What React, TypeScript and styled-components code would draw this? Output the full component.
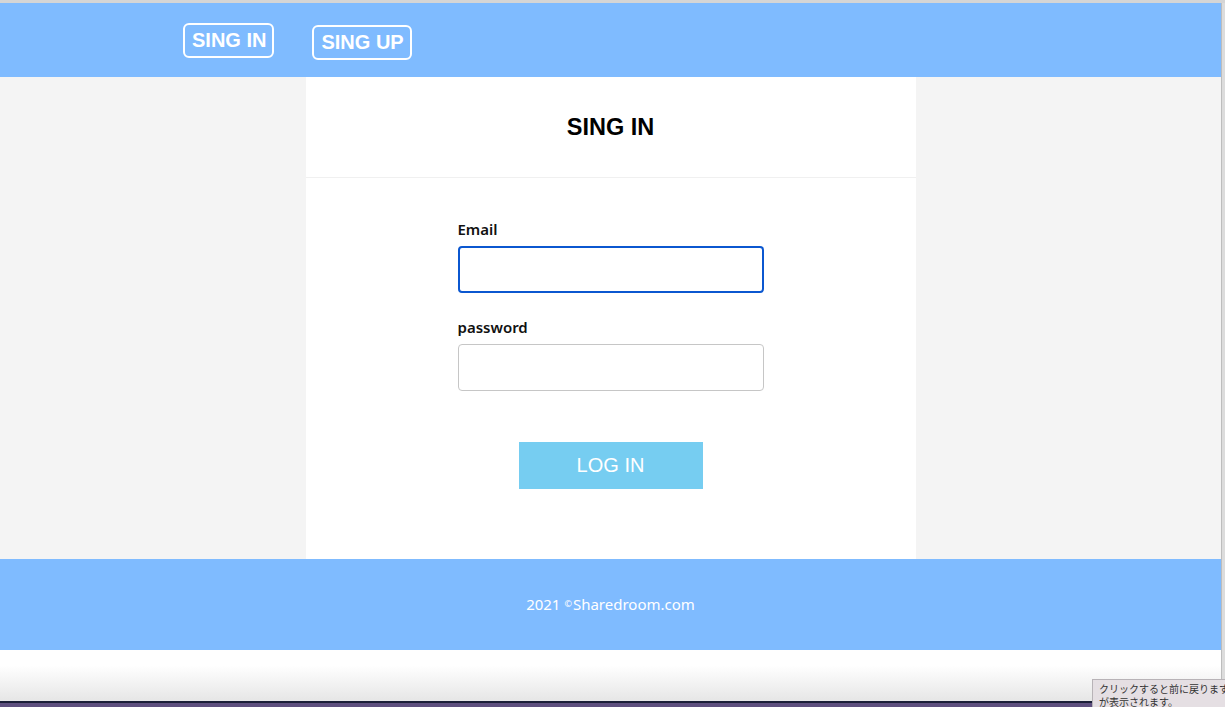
import React from "react";
import styled, { createGlobalStyle } from "styled-components";

const GlobalStyle = createGlobalStyle`
  html, body { margin: 0; padding: 0; background: #ffffff; overflow: hidden; }
  * { box-sizing: border-box; }
`;

const Screen = styled.div`
  position: relative;
  width: 1225px;
  height: 707px;
  display: flex;
  flex-direction: column;
  background: #ffffff;
  overflow: hidden;
`;

const TopEdge = styled.div`
  height: 3px;
  background: #d5d5d5;
  flex: none;
`;

const Frame = styled.div`
  flex: 1;
  display: flex;
  min-height: 0;
`;

const Viewport = styled.div`
  flex: 1;
  display: flex;
  flex-direction: column;
`;

const ScrollEdge = styled.div`
  width: 4px;
  flex: none;
  background: linear-gradient(to right, #bdbdbd 0 1px, #dcdcdc 1px);
`;

const Header = styled.header`
  height: 74px;
  flex: none;
  background: #7fbbff;
  display: flex;
  align-items: flex-start;
  padding: 20px 0 0 183px;
  gap: 38px;
`;

const NavButton = styled.a<{ $offset: number }>`
  margin-top: ${(p) => p.$offset}px;
  height: 35px;
  display: flex;
  align-items: center;
  padding: 0 6px 0 7px;
  border: 2px solid #ffffff;
  border-radius: 6px;
  color: #ffffff;
  font-family: "Liberation Sans", Arial, sans-serif;
  font-weight: 700;
  font-size: 20px;
  text-decoration: none;
`;

const Main = styled.main`
  height: 482px;
  flex: none;
  background: #f4f4f4;
  display: flex;
  justify-content: center;
`;

const Card = styled.section`
  width: 610px;
  background: #ffffff;
  display: flex;
  flex-direction: column;
`;

const CardHead = styled.div`
  height: 101px;
  border-bottom: 1px solid #f0f0f0;
  display: flex;
  align-items: center;
  justify-content: center;
`;

const Title = styled.h1`
  margin: 0;
  font-family: "Liberation Sans", Arial, sans-serif;
  font-weight: 700;
  font-size: 23.5px;
  color: #000000;
`;

const Form = styled.form`
  width: 306px;
  align-self: center;
  display: flex;
  flex-direction: column;
  padding-top: 41px;
`;

const Field = styled.div<{ $gap: number }>`
  display: flex;
  flex-direction: column;
  margin-bottom: ${(p) => p.$gap}px;
`;

const Label = styled.label`
  height: 20px;
  line-height: 20px;
  margin-bottom: 7px;
  font-family: "Noto Sans", "Noto Sans CJK JP", sans-serif;
  font-weight: 600;
  font-size: 15px;
  color: #111111;
`;

const Input = styled.input<{ $focused?: boolean }>`
  height: 47px;
  width: 100%;
  border-radius: 4px;
  background: #ffffff;
  outline: none;
  border: ${(p) => (p.$focused ? "2px solid #0b57d0" : "1px solid #c6c6c6")};
  font-size: 16px;
  padding: 0 10px;
`;

const SubmitButton = styled.button`
  align-self: center;
  width: 184px;
  height: 47px;
  border: none;
  background: #76cdf1;
  color: #ffffff;
  font-family: "Liberation Sans", Arial, sans-serif;
  font-weight: 400;
  font-size: 20px;
  cursor: pointer;
`;

const Footer = styled.footer`
  height: 91px;
  flex: none;
  background: #7fbbff;
  display: flex;
  align-items: center;
  justify-content: center;
  color: #ffffff;
  font-family: "Noto Sans", "Noto Sans CJK JP", sans-serif;
  font-size: 15px;
  padding-bottom: 2px;
`;

const Copy = styled.span`
  font-size: 9px;
  vertical-align: 2px;
  margin: 0 1px 0 4px;
`;

const Filler = styled.div`
  flex: 1;
  background: linear-gradient(to bottom, #ffffff 0%, #ffffff 30%, #e6e6e6 100%);
`;

const BottomBar = styled.div`
  height: 6px;
  flex: none;
  background: linear-gradient(to bottom, #1b1f38 0 2px, #5e4f7e 2px);
`;

const Tooltip = styled.div`
  position: absolute;
  left: 1092px;
  top: 679px;
  width: 140px;
  height: 30px;
  padding: 2px 0 0 6px;
  background: #e5dfe3;
  border: 1px solid #b8b3b7;
  color: #333333;
  font-family: "Noto Sans CJK JP", sans-serif;
  font-size: 10px;
  line-height: 13px;
  white-space: nowrap;
  overflow: hidden;
`;

export default function App() {
  return (
    <>
      <GlobalStyle />
      <Screen>
        <TopEdge />
        <Frame>
          <Viewport>
            <Header>
              <NavButton href="#" $offset={0}>SING IN</NavButton>
              <NavButton href="#" $offset={2}>SING UP</NavButton>
            </Header>
            <Main>
              <Card>
                <CardHead>
                  <Title>SING IN</Title>
                </CardHead>
                <Form onSubmit={(e) => e.preventDefault()}>
                  <Field $gap={24}>
                    <Label>Email</Label>
                    <Input type="email" $focused />
                  </Field>
                  <Field $gap={51}>
                    <Label>password</Label>
                    <Input type="password" />
                  </Field>
                  <SubmitButton type="submit">LOG IN</SubmitButton>
                </Form>
              </Card>
            </Main>
            <Footer>
              2021<Copy>©</Copy>Sharedroom.com
            </Footer>
            <Filler />
          </Viewport>
          <ScrollEdge />
        </Frame>
        <BottomBar />
        <Tooltip>
          クリックすると前に戻ります
          <br />
          が表示されます。
        </Tooltip>
      </Screen>
    </>
  );
}
